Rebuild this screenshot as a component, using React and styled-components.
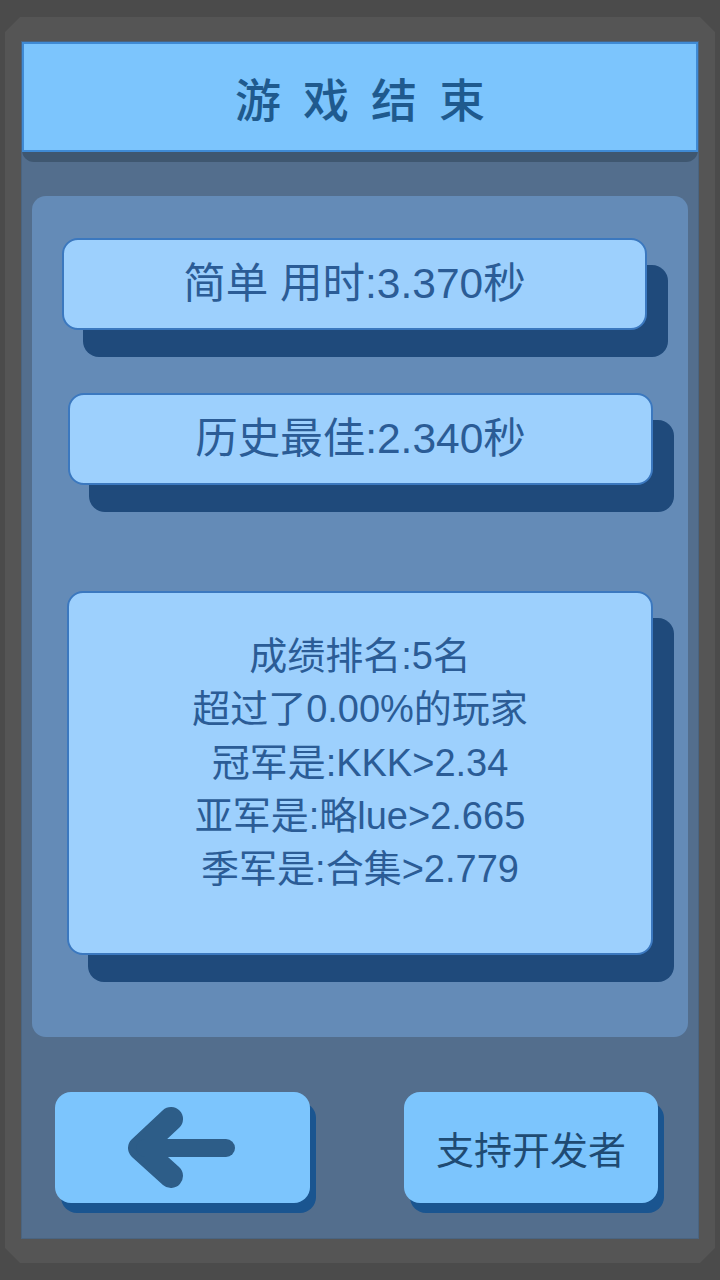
import React from "react";
import styled, { createGlobalStyle } from "styled-components";

const Global = createGlobalStyle`
  html, body { margin: 0; padding: 0; background: #4b4b4b; }
  body { font-family: "Liberation Sans", "Noto Sans CJK SC", sans-serif; }
  * { box-sizing: border-box; }
`;

const Frame = styled.div`
  margin: 17px 5px;
  height: 1246px;
  padding: 25px 17px;
  background: #555555;
  clip-path: polygon(15px 0, calc(100% - 15px) 0, 100% 15px, 100% calc(100% - 15px), calc(100% - 15px) 100%, 15px 100%, 0 calc(100% - 15px), 0 15px);
`;

const Panel = styled.div`
  height: 1196px;
  background: #536e8d;
  box-shadow: 0 0 0 1px #4a6480;
  display: flex;
  flex-direction: column;
`;

const HeaderWrap = styled.div`
  background: #3f5770;
  padding-bottom: 10px;
  border-radius: 0 0 12px 12px;
`;

const Header = styled.div`
  height: 110px;
  background: #7cc5fd;
  border: 2px solid #3f8ad4;
  display: flex;
  align-items: center;
  justify-content: center;
`;

const Title = styled.h1`
  margin: 0;
  font-size: 46px;
  font-weight: 500;
  letter-spacing: 22px;
  padding-left: 22px;
  color: #1f5a8e;
  line-height: 1;
  font-family: "Noto Sans CJK SC", sans-serif;
`;

const Board = styled.div`
  margin: 34px 0 0 10px;
  width: 656px;
  height: 841px;
  background: #648bb7;
  border-radius: 14px;
  padding-top: 42px;
  display: flex;
  flex-direction: column;
`;

const Card = styled.div`
  margin-left: ${(p) => p.$left}px;
  margin-top: ${(p) => p.$top || 0}px;
  width: ${(p) => p.$w}px;
  height: ${(p) => p.$h}px;
  background: #9dd0fd;
  border: 2px solid #3b78bf;
  border-radius: 16px;
  box-shadow: 21px 27px 0 #1f4a7b;
  color: #2b5c96;
  display: flex;
  flex-direction: column;
  align-items: center;
  justify-content: ${(p) => (p.$multi ? "flex-start" : "center")};
  padding-top: ${(p) => (p.$multi ? 37 : 0)}px;
`;

const CardText = styled.div`
  font-size: 42.5px;
  line-height: 1;
  white-space: pre;
`;

const Line = styled.div`
  font-size: 38px;
  line-height: 53.3px;
  white-space: pre;
`;

const ButtonRow = styled.div`
  margin: 55px 0 0 33px;
  display: flex;
  gap: 94px;
`;

const Button = styled.button`
  width: ${(p) => p.$w}px;
  height: 111px;
  border: none;
  padding: 0;
  background: #7cc5fd;
  border-radius: 16px;
  box-shadow: 6px 10px 0 #1a5590;
  display: flex;
  align-items: center;
  justify-content: center;
  color: #1f4b73;
  font-family: "Liberation Sans", "Noto Sans CJK SC", sans-serif;
  font-size: 38px;
  cursor: pointer;
`;

const ArrowIcon = () => (
  <svg width="116" height="84" viewBox="0 0 116 84">
    <path d="M46 13 L15 42 L46 70" fill="none" stroke="#2d5d88" strokeWidth="24" strokeLinecap="round" strokeLinejoin="round" />
    <path d="M20 42 H101" fill="none" stroke="#2d5d88" strokeWidth="18" strokeLinecap="round" />
  </svg>
);

export default function App() {
  return (
    <>
      <Global />
      <Frame>
        <Panel>
          <HeaderWrap>
            <Header>
              <Title>游戏结束</Title>
            </Header>
          </HeaderWrap>
          <Board>
            <Card $left={30} $w={585} $h={92}>
              <CardText>简单 用时:3.370秒</CardText>
            </Card>
            <Card $left={36} $top={63} $w={585} $h={92}>
              <CardText>历史最佳:2.340秒</CardText>
            </Card>
            <Card $left={35} $top={106} $w={586} $h={364} $multi>
              <Line>成绩排名:5名</Line>
              <Line>超过了0.00%的玩家</Line>
              <Line>冠军是:KKK&gt;2.34</Line>
              <Line>亚军是:略lue&gt;2.665</Line>
              <Line>季军是:合集&gt;2.779</Line>
            </Card>
          </Board>
          <ButtonRow>
            <Button $w={255} aria-label="返回">
              <ArrowIcon />
            </Button>
            <Button $w={254}>支持开发者</Button>
          </ButtonRow>
        </Panel>
      </Frame>
    </>
  );
}
